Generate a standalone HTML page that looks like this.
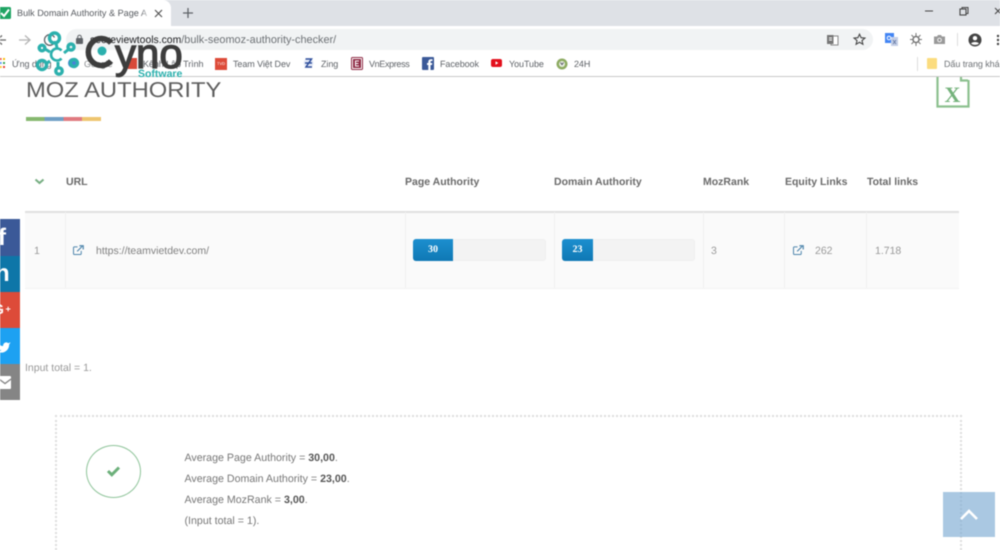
<!DOCTYPE html>
<html lang="vi">
<head>
<meta charset="utf-8">
<title>Moz Authority</title>
<style>
html,body{margin:0;padding:0;background:#fff;width:1000px;height:550px;overflow:hidden}
body{font-family:"Liberation Sans","Noto Sans CJK JP",sans-serif;color:#888;text-rendering:geometricPrecision}
#w{position:relative;width:1000px;height:550px;overflow:hidden;filter:blur(.4px);background:#fff}
.a{position:absolute;white-space:nowrap}
.bm{font-size:9px;color:#5f6368;top:57.5px;line-height:12px;letter-spacing:-.08px}
.th{font-size:10.5px;font-weight:bold;color:#6a6a6a;top:175.5px;line-height:13px}
.td{font-size:10.5px;color:#999;top:244.6px;line-height:13px}
.line{font-size:10.65px;color:#777;left:184.5px;line-height:13px}
.line b{color:#555}
.bar{position:absolute;top:239px;height:22px;border-radius:3px;background:#f3f3f3;border:1px solid #efefef;box-sizing:border-box;width:133px}
.fill{position:absolute;left:-1px;top:-1px;height:22px;background:linear-gradient(#1c8fcf,#0f78b4);border-radius:3px 0 0 3px;color:#fff;font:bold 10px/21px "Liberation Serif",serif;text-align:center;box-sizing:border-box}
.vl{position:absolute;top:212px;height:76px;width:1px;background:#f0f0f0}
.soc{position:absolute;left:0;width:20px;overflow:hidden;color:#fff;font-weight:bold}
</style>
</head>
<body>
<div id="w">
<!-- tab strip -->
<div class="a" style="left:0;top:0;width:1000px;height:26px;background:#dee1e6"></div>
<div class="a" style="left:0;top:0;width:171px;height:26px;background:#fff;border-radius:0 8px 0 0"></div>
<svg class="a" style="left:0;top:7px" width="11" height="12" viewBox="0 0 11 12"><rect x="-2" width="13" height="12" rx="1.500" fill="#1fa463"/><path d="M1 6l3 3 5-6.500" stroke="#fff" stroke-width="2" fill="none"/></svg>
<div class="a" style="left:17px;top:7px;font-size:9.1px;line-height:12px;color:#55595e;width:132px;overflow:hidden">Bulk Domain Authority &amp; Page A</div>
<div class="a" style="left:140px;top:0;width:11px;height:26px;background:linear-gradient(90deg,rgba(255,255,255,0),#fff)"></div>
<svg class="a" style="left:154px;top:9px" width="9" height="9" viewBox="0 0 9 9"><path d="M1 1l7 7M8 1l-7 7" stroke="#555" stroke-width="1.200"/></svg>
<svg class="a" style="left:182px;top:7px" width="12" height="12" viewBox="0 0 12 12"><path d="M6 1v10M1 6h10" stroke="#5f6368" stroke-width="1.300"/></svg>
<svg class="a" style="left:925px;top:6px" width="75" height="12" viewBox="0 0 75 12"><path d="M0 5h8" stroke="#444" stroke-width="1"/><rect x="35" y="3" width="6" height="6" fill="none" stroke="#444" stroke-width="1.100"/><path d="M37 3V1.500h6v6h-2" fill="none" stroke="#444" stroke-width="1"/><path d="M70 2l6 6M76 2l-6 6" stroke="#444" stroke-width="1"/></svg>

<!-- toolbar -->
<div class="a" style="left:0;top:26px;width:1000px;height:24px;background:#fff"></div>
<div class="a" style="left:66px;top:29px;width:807px;height:21px;background:#f1f3f4;border-radius:11px"></div>
<svg class="a" style="left:0;top:33px" width="32" height="14" viewBox="0 0 32 14"><path d="M6 7H-3M2 2.500L-3 7l5 4.500" fill="none" stroke="#666" stroke-width="1.300"/><path d="M19 7h10M25 2.500L30 7l-5 4.500" fill="none" stroke="#b5b5b5" stroke-width="1.300"/></svg>
<svg class="a" style="left:43px;top:33px" width="14" height="14" viewBox="0 0 14 14"><path d="M11.500 4.500A5.300 5.300 0 1 0 12 8" fill="none" stroke="#5f6368" stroke-width="1.300"/></svg>
<svg class="a" style="left:75px;top:34px" width="9" height="11" viewBox="0 0 9 11"><rect x="1" y="4" width="7" height="6" rx="1" fill="#5f6368"/><path d="M2.700 4.500V3a1.800 1.800 0 0 1 3.600 0v1.500" fill="none" stroke="#5f6368" stroke-width="1"/></svg>
<div class="a" style="left:90px;top:33px;font-size:10.9px;line-height:14px;color:#6d7175"><span style="color:#202124;font-size:10.4px">seoreviewtools.com</span>/bulk-seomoz-authority-checker/</div>

<!-- right toolbar icons -->
<svg class="a" style="left:826px;top:33px" width="13" height="13" viewBox="0 0 13 13"><rect x="5" y="3" width="7" height="9" fill="#fff" stroke="#888"/><rect x="1" y="2" width="6.500" height="9" fill="#777"/><path d="M3 5h3M3 7h3" stroke="#fff"/></svg>
<svg class="a" style="left:853px;top:33px" width="13" height="13" viewBox="0 0 13 13"><path d="M6.500 1.200l1.600 3.500 3.800.4-2.900 2.500.9 3.700-3.400-2-3.400 2 .9-3.700-2.900-2.500 3.800-.4z" fill="none" stroke="#444" stroke-width="1.100"/></svg>
<svg class="a" style="left:885px;top:33px" width="13" height="13" viewBox="0 0 13 13"><path d="M0 0h9v10H0z" fill="#4285f4"/><path d="M6 4h7v9H6z" fill="#c5cfe6"/><circle cx="4" cy="5" r="1.800" fill="none" stroke="#fff"/><path d="M8 7l3 4M11 7l-3 4" stroke="#6a7fa8"/></svg>
<svg class="a" style="left:910px;top:33px" width="12" height="13" viewBox="0 0 12 13"><circle cx="6" cy="6.500" r="3" fill="none" stroke="#777" stroke-width="1.500"/><path d="M6 0v3M6 10v3M0 6.500h3M9 6.500h3M1.500 2l2 2M8.500 9l2 2M10.500 2l-2 2M3.500 9l-2 2" stroke="#777"/></svg>
<svg class="a" style="left:933px;top:34px" width="13" height="11" viewBox="0 0 13 11"><path d="M1 2.500h3L5 1h3l1 1.500h3V10H1z" fill="#999"/><circle cx="6.500" cy="6" r="2.300" fill="#eee"/><circle cx="6.500" cy="6" r="1.200" fill="#888"/></svg>
<div class="a" style="left:957px;top:33px;width:1px;height:13px;background:#ddd"></div>
<svg class="a" style="left:968px;top:33px" width="14" height="14" viewBox="0 0 14 14"><circle cx="7" cy="7" r="6.500" fill="#444"/><circle cx="7" cy="5.200" r="2.200" fill="#fff"/><path d="M3 10.500c1.500-2 6.500-2 8 0-2 1.800-6 1.800-8 0z" fill="#fff"/></svg>
<svg class="a" style="left:996px;top:34px" width="4" height="12" viewBox="0 0 4 12"><circle cx="2" cy="2" r="1.200" fill="#444"/><circle cx="2" cy="6" r="1.200" fill="#444"/><circle cx="2" cy="10" r="1.200" fill="#444"/></svg>

<!-- bookmarks -->
<div class="a" style="left:0;top:50px;width:1000px;height:26px;background:#fff"></div>
<div class="a" style="left:0;top:76px;width:1000px;height:1px;background:#c9c9c9"></div>
<svg class="a" style="left:0;top:58px" width="6" height="10" viewBox="0 0 6 10"><path d="M0 0h1.500v2H0z" fill="#ea4335"/><path d="M3 0h2v2H3z" fill="#fbbc05"/><path d="M0 4h1.500v2H0z" fill="#4285f4"/><path d="M3 4h2v2H3z" fill="#34a853"/><path d="M0 8h1.500v2H0z" fill="#fbbc05"/><path d="M3 8h2v2H3z" fill="#ea4335"/></svg>
<div class="a bm" style="left:12px">Ứng dụng</div>
<div class="a" style="left:68px;top:58px;width:10px;height:10px;border-radius:50%;background:#4a80d8"></div>
<div class="a bm" style="left:84px;color:#8a8d90">Google</div>
<div class="a" style="left:128px;top:58px;width:9px;height:11px;background:#d84a3a"></div>
<div class="a bm" style="left:143px">Kênh Lập Trình</div>
<div class="a" style="left:215px;top:58px;width:12px;height:12px;background:#dd4b39;color:#fff;font-size:4px;line-height:12px;text-align:center">TVD</div>
<div class="a bm" style="left:233px">Team Việt Dev</div>
<svg class="a" style="left:303px;top:57px" width="11" height="12" viewBox="0 0 11 12"><circle cx="5.500" cy="6" r="5" fill="#e6ebf7"/><path d="M2.500 2h6L3 10h6M2 6h7" fill="none" stroke="#2f4f9c" stroke-width="1.500"/></svg>
<div class="a bm" style="left:321px">Zing</div>
<svg class="a" style="left:351px;top:57px" width="12" height="13" viewBox="0 0 12 13"><rect x=".5" y=".5" width="11" height="12" rx="1" fill="#fff" stroke="#8e2a44"/><rect x="2" y="2" width="8" height="9" fill="#8e2a44"/><path d="M8 4H4.500v5H8M4.500 6.500H7.500" fill="none" stroke="#fff"/></svg>
<div class="a bm" style="left:369px;letter-spacing:-.35px">VnExpress</div>
<svg class="a" style="left:422px;top:57px" width="12" height="13" viewBox="0 0 12 13"><rect width="12" height="13" rx="1" fill="#3b5998"/><path d="M8.500 13V8h1.500l.3-2H8.500V5c0-.7.300-1 1-1h1V2.200H9c-1.800 0-2.700 1-2.700 2.600V6H5v2h1.300v5z" fill="#fff"/></svg>
<div class="a bm" style="left:440px">Facebook</div>
<svg class="a" style="left:491px;top:58px" width="11" height="10" viewBox="0 0 11 10"><rect y="1" width="11" height="8" rx="2" fill="#e3101c"/><path d="M4.500 3.300v3.400L7.300 5z" fill="#fff"/></svg>
<div class="a bm" style="left:509px">YouTube</div>
<svg class="a" style="left:556px;top:57px" width="12" height="13" viewBox="0 0 12 13"><circle cx="6" cy="7" r="5.500" fill="#8dab62"/><circle cx="6" cy="7" r="3" fill="#e8eee0"/><path d="M4.500 5.500L6 7.500 7.500 5.500" stroke="#556" fill="none"/></svg>
<div class="a bm" style="left:574px">24H</div>
<div class="a" style="left:917px;top:57px;width:1px;height:14px;background:#ddd"></div>
<svg class="a" style="left:927px;top:58px" width="10" height="11" viewBox="0 0 10 11"><path d="M0 1a1 1 0 0 1 1-1h8a1 1 0 0 1 1 1v9a1 1 0 0 1-1 1H1a1 1 0 0 1-1-1z" fill="#fbdc7f"/></svg>
<div class="a bm" style="left:944px;color:#6d7175">Dấu trang khác</div>

<!-- title -->
<div class="a" style="left:26px;top:75px;font-size:21.5px;line-height:30px;color:#5e5e5e;transform:scaleX(1.105);transform-origin:0 0">MOZ AUTHORITY</div>
<div class="a" style="left:25.500px;top:117px;width:75px;height:4px;background:linear-gradient(90deg,#86b86f 0 25%,#6f9fc5 25% 50%,#e07a80 50% 75%,#eec56f 75% 100%)"></div>

<!-- excel icon -->
<svg class="a" style="left:936px;top:77px" width="34" height="31" viewBox="0 0 34 31"><path d="M1.500 0V29.500H32.500V3M25 0v3.500h7" fill="none" stroke="#8cc08f" stroke-width="2.200"/><text x="16.500" y="25" text-anchor="middle" font-family="Liberation Serif,serif" font-weight="bold" font-size="22" fill="#74b27b">X</text></svg>

<!-- logo overlay -->
<svg class="a" style="left:34px;top:30px" width="152" height="50" viewBox="0 0 152 50" font-family="Liberation Sans,sans-serif">
  <g fill="none" stroke="#2bb0ad" stroke-width="3.400">
    <circle cx="20.500" cy="8" r="5"/><circle cx="8" cy="35" r="4.500"/><circle cx="25" cy="41" r="3.200"/>
    <circle cx="37" cy="17" r="3"/><circle cx="8" cy="18" r="2.800"/><circle cx="40" cy="33" r="3.500"/>
    <path d="M22 13l1 5M11 19l5 3M30 23l5-4M13 33l3-2M24 32v6" stroke-width="3"/>
    <path d="M27.500 20.500a6 6 0 1 0 0 8" stroke-width="2.600"/>
  </g>
  <path d="M77 13A13 13.500 0 1 0 77 31" fill="none" stroke="#3d3d3d" stroke-width="5.500"/>
  <circle cx="68" cy="21" r="4.500" fill="#2bb0ad"/>
  <text x="81" y="38" font-size="42" fill="#3d3d3d" stroke="#3d3d3d" stroke-width="1.200">yno</text>
  <text x="104" y="47" font-size="10.500" font-weight="bold" fill="#2bb0ad">Software</text>
</svg>

<!-- table head -->
<svg class="a" style="left:34px;top:178px" width="11" height="7" viewBox="0 0 11 7"><path d="M1.500 1.500l4 3.500 4-3.500" fill="none" stroke="#76ae82" stroke-width="2"/></svg>
<div class="a th" style="left:66px">URL</div>
<div class="a th" style="left:405px">Page Authority</div>
<div class="a th" style="left:554px">Domain Authority</div>
<div class="a th" style="left:703px">MozRank</div>
<div class="a th" style="left:785px">Equity Links</div>
<div class="a th" style="left:867px">Total links</div>

<!-- table row -->
<div class="a" style="left:25px;top:211px;width:934px;height:2px;background:#e0e0e0"></div>
<div class="a" style="left:25px;top:213px;width:934px;height:75px;background:#fafafa"></div>
<div class="a" style="left:25px;top:288px;width:934px;height:1px;background:#f3f3f3"></div>
<div class="vl" style="left:65px"></div>
<div class="vl" style="left:405px"></div>
<div class="vl" style="left:554px"></div>
<div class="vl" style="left:703px"></div>
<div class="vl" style="left:784px"></div>
<div class="vl" style="left:866px"></div>
<div class="a td" style="left:34px">1</div>
<svg class="a" style="left:73px;top:244.500px" width="11" height="10" viewBox="0 0 12 11"><path d="M9 6.500V9.500a1 1 0 0 1-1 1H1.500a1 1 0 0 1-1-1V3a1 1 0 0 1 1-1H5" fill="none" stroke="#4f86ad" stroke-width="1.100"/><path d="M4.500 7L10 1.500M7 .8h4.200V5" fill="none" stroke="#4f86ad" stroke-width="1.300"/></svg>
<div class="a td" style="left:96px;color:#808080">https://teamvietdev.com/</div>
<div class="bar" style="left:413px"><div class="fill" style="width:40px">30</div></div>
<div class="bar" style="left:562px"><div class="fill" style="width:31px">23</div></div>
<div class="a td" style="left:711px">3</div>
<svg class="a" style="left:792.500px;top:244.500px" width="11" height="10" viewBox="0 0 12 11"><path d="M9 6.500V9.500a1 1 0 0 1-1 1H1.500a1 1 0 0 1-1-1V3a1 1 0 0 1 1-1H5" fill="none" stroke="#4f86ad" stroke-width="1.100"/><path d="M4.500 7L10 1.500M7 .8h4.200V5" fill="none" stroke="#4f86ad" stroke-width="1.300"/></svg>
<div class="a td" style="left:815px">262</div>
<div class="a td" style="left:875px">1.718</div>

<!-- social -->
<div class="soc" style="top:219px;height:37px;background:#3b5998"><span class="a" style="left:-2px;top:6.500px;font-size:24px;line-height:24px">f</span></div>
<div class="soc" style="top:256px;height:36px;background:#0e76a8"><span class="a" style="left:-5px;top:6px;font-size:24px;line-height:24px">n</span></div>
<div class="soc" style="top:292px;height:36px;background:#dd4b39"><span class="a" style="left:-7px;top:10px;font-size:14px;line-height:14px">G</span><span class="a" style="left:5.500px;top:11px;font-size:9px;line-height:12px">+</span></div>
<div class="soc" style="top:328px;height:36px;background:#1da1f2"><svg class="a" style="left:-3px;top:11px" width="14" height="15" viewBox="0 0 14 16"><path d="M0 4c2 2.500 4 3.500 6 3.500C6 4 9.500 2.500 11.500 4.500L14 3.500 12.500 6c0 5-4 8.500-8 8.500-2 0-3.500-.5-4.500-1 2 0 3-.5 4-1.500C1.500 11 .5 9 1 8c-.5-1-1.500-2.500-1-4z" fill="#fff"/></svg></div>
<div class="soc" style="top:364px;height:36px;background:#858585"><svg class="a" style="left:-1px;top:12px" width="12" height="13" viewBox="0 0 12 13"><rect y="0" width="12" height="13" rx="1" fill="#fff"/><path d="M0 3l6 4.500L12 3" fill="none" stroke="#858585" stroke-width="1.300"/></svg></div>

<div class="a" style="left:25px;top:361.500px;font-size:10.500px;line-height:13px;color:#999">Input total = 1.</div>

<!-- summary box -->
<div class="a" style="left:55px;top:415px;width:907px;height:135px;box-sizing:border-box;border:2px dotted #dcdcdc;border-bottom:0"></div>
<div class="a" style="left:86px;top:445px;width:55px;height:53px;box-sizing:border-box;border:1px solid #8fc49a;border-radius:50%"></div>
<svg class="a" style="left:106px;top:465px" width="15" height="12" viewBox="0 0 15 12"><path d="M2 6l3.800 3.800L13 2.500" fill="none" stroke="#6cb07a" stroke-width="3"/></svg>
<div class="a line" style="top:451.500px">Average Page Authority = <b>30,00</b>.</div>
<div class="a line" style="top:472.500px">Average Domain Authority = <b>23,00</b>.</div>
<div class="a line" style="top:493.500px">Average MozRank = <b>3,00</b>.</div>
<div class="a line" style="top:515px">(Input total = 1).</div>

<!-- back to top -->
<div class="a" style="left:943px;top:492px;width:52px;height:45px;background:rgba(125,170,210,.65)"></div>
<svg class="a" style="left:959px;top:507px" width="20" height="14" viewBox="0 0 20 14"><path d="M2 12l8-8 8 8" fill="none" stroke="#fff" stroke-width="2.600"/></svg>
</div>
</body>
</html>
